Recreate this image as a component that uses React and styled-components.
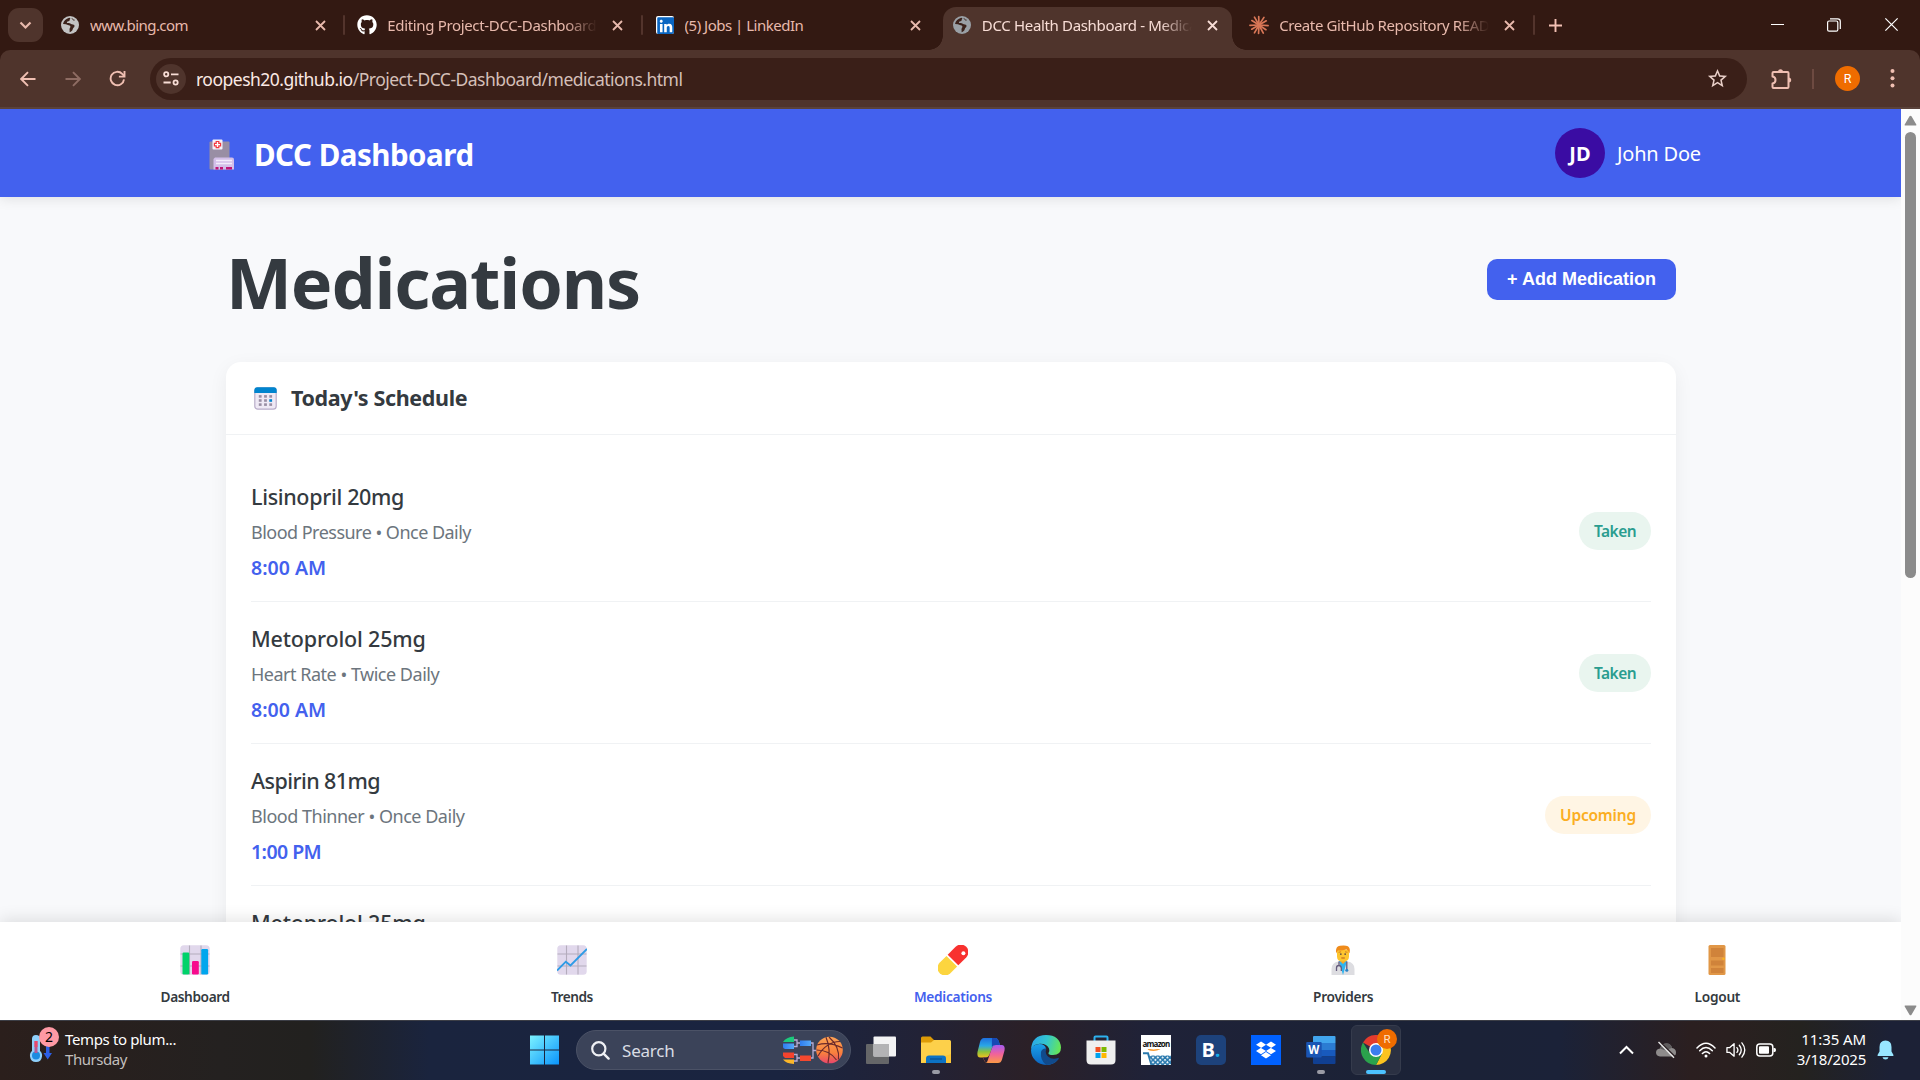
import React from "react";
import styled, { createGlobalStyle, css } from "styled-components";
import { FaGithub, FaLinkedin, FaDropbox } from "react-icons/fa";
import { MdStarBorder } from "react-icons/md";

const GlobalStyle = createGlobalStyle`
  * { box-sizing: border-box; margin: 0; padding: 0; }
  body {
    font-family: "Noto Sans", "Open Sans", sans-serif;
    background: #331912;
    overflow: hidden;
  }
  svg { display: block; flex: none; }
  button { border: 0; background: none; font: inherit; color: inherit; }
`;

const tracked = css`
  letter-spacing: ${(p) => p.$track || 0}px;
  white-space: nowrap;
`;

const Screen = styled.div`
  width: 1920px;
  height: 1080px;
  display: flex;
  flex-direction: column;
  overflow: hidden;
`;

/* ---------- browser tabs ---------- */

const TabStrip = styled.div`
  height: 50px;
  display: flex;
  align-items: flex-end;
  padding-left: 8px;
  background: #331912;
  color: #e8b9ac;
`;

const TabSearch = styled.button`
  width: 35px;
  height: 34px;
  margin: 0 8px 8px 0;
  border-radius: 11px;
  background: #4f342c;
  display: grid;
  place-items: center;
`;

const Tab = styled.div`
  position: relative;
  width: 289.6px;
  height: 43px;
  padding: 0 0 7px 9px;
  display: grid;
  grid-template-columns: 20px 211px 26px;
  column-gap: 10px;
  align-items: center;
  color: ${(p) => (p.$active ? "#f8ddd6" : "#e8b9ac")};
  background: ${(p) => (p.$active ? "#4f342c" : "transparent")};
  border-radius: 13px 13px 0 0;

  ${(p) =>
    p.$active &&
    css`
      &::before,
      &::after {
        content: "";
        position: absolute;
        bottom: 0;
        width: 14px;
        height: 14px;
      }
      &::before {
        left: -14px;
        background: radial-gradient(circle at 0 0, transparent 13.5px, #4f342c 14px);
      }
      &::after {
        right: -14px;
        background: radial-gradient(circle at 100% 0, transparent 13.5px, #4f342c 14px);
      }
    `}
`;

const Favicon = styled.span`
  display: grid;
  place-items: center;
`;

const LinkedInMark = styled.span`
  width: 18px;
  height: 18px;
  border-radius: 2px;
  background: #fff;
  color: #0a66c2;
  display: grid;
  place-items: center;
  overflow: hidden;
`;

const TabTitle = styled.span`
  ${tracked}
  font-size: 15px;
  line-height: 36px;
  overflow: hidden;
  ${(p) => p.$fade && css`mask-image: linear-gradient(to right, #000 178px, transparent 210px);`}
`;

const TabClose = styled.button`
  height: 36px;
  margin-left: -7px;
  display: grid;
  place-items: center;
`;

const TabGap = styled.span`
  width: 7.7px;
  height: 43px;
  padding-top: 8px;
  display: flex;
  justify-content: center;

  &::after {
    content: "";
    width: 2px;
    height: 20px;
    border-radius: 1px;
    background: ${(p) => (p.$visible ? "#53342c" : "transparent")};
  }
`;

const NewTab = styled.button`
  width: 37px;
  height: 36px;
  margin-bottom: 7px;
  display: grid;
  place-items: center;
  color: #f3c1b4;
`;

const WindowControls = styled.div`
  height: 50px;
  margin-left: auto;
  display: flex;
  color: #fff;
`;

const WindowButton = styled.button`
  width: 57px;
  height: 49px;
  display: grid;
  place-items: center;
`;

/* ---------- address bar ---------- */

const ToolbarBack = styled.div`
  height: 59px;
  background: #331912;
`;

const Toolbar = styled.div`
  height: 59px;
  padding-left: 5px;
  display: flex;
  align-items: center;
  background: #4f342c;
  border-bottom: 2px solid #5a423b;
  border-radius: 10px 10px 0 0;
`;

const ToolButton = styled.button`
  width: ${(p) => p.$width || 45}px;
  height: 42px;
  display: grid;
  place-items: center;
  color: ${(p) => (p.$dim ? "#8e6c63" : "#f0bfb2")};
`;

const AddressBar = styled.div`
  width: 1597px;
  height: 42px;
  margin: 0 13px 0 10px;
  padding: 0 18px 0 6px;
  display: flex;
  align-items: center;
  border-radius: 21px;
  background: #3a1f18;
`;

const SiteInfo = styled.button`
  width: 30px;
  height: 30px;
  border-radius: 50%;
  background: #4f342c;
  display: grid;
  place-items: center;
`;

const Url = styled.span`
  ${tracked}
  flex: 1;
  margin-left: 10px;
  font-size: 17.5px;
  line-height: 42px;
  padding-top: 1px;
  color: #d5bfb8;
`;

const Host = styled.span`
  color: #fbe9e4;
`;

const ToolDivider = styled.span`
  width: 2px;
  height: 20px;
  margin: 0 11px 0 10px;
  background: #6d4a41;
`;

const ProfileDot = styled.span`
  width: 25px;
  height: 25px;
  margin: 0 20px 0 10px;
  border-radius: 50%;
  background: #ef6c00;
  color: #fff;
  font: 400 12.5px/25px Roboto, sans-serif;
  text-align: center;
`;

/* ---------- web page ---------- */

const Viewport = styled.div`
  height: 911px;
  display: grid;
  grid-template-columns: 1901px 19px;
`;

const Page = styled.div`
  height: 911px;
  display: flex;
  flex-direction: column;
  overflow: hidden;
  background: #f8f9fb;
  color: #343a40;
`;

const SiteHeader = styled.header`
  position: relative;
  z-index: 1;
  flex: none;
  height: 88px;
  padding: 0 200px 0 209px;
  display: flex;
  justify-content: space-between;
  align-items: center;
  background: #4361ee;
  color: #fff;
  box-shadow: 0 2px 12px rgba(0, 0, 0, 0.1);
`;

const Brand = styled.div`
  display: flex;
  align-items: center;
  gap: 19px;
  padding-top: 3px;
`;

const BrandName = styled.span`
  ${tracked}
  font-size: 29.5px;
  font-weight: 700;
  line-height: 40px;
`;

const User = styled.div`
  display: flex;
  align-items: center;
  gap: 12px;
`;

const Avatar = styled.span`
  ${tracked}
  width: 50px;
  height: 50px;
  border-radius: 50%;
  background: #3a0ca3;
  font-size: 20px;
  font-weight: 700;
  line-height: 52px;
  text-align: center;
`;

const UserName = styled.span`
  ${tracked}
  font-size: 20px;
  line-height: 50px;
  padding-top: 2px;
  width: 84px;
`;

const Main = styled.main`
  flex: 1;
  min-height: 0;
  padding: 29px 225px 0 226px;
  display: flex;
  flex-direction: column;
  overflow: hidden;
`;

const TitleRow = styled.div`
  flex: none;
  height: 110px;
  margin-bottom: 26px;
  display: flex;
  justify-content: space-between;
  align-items: center;
`;

const PageTitle = styled.h1`
  ${tracked}
  font-size: 70px;
  font-weight: 700;
  line-height: 110px;
  padding-top: 2px;
`;

const AddButton = styled.button`
  ${tracked}
  width: 189px;
  height: 41px;
  margin-bottom: 3px;
  border-radius: 10px;
  background: #4361ee;
  color: #fff;
  font: 700 18px/41px "Liberation Sans", Arial, sans-serif;
`;

const Card = styled.section`
  flex: none;
  height: 720px;
  border-radius: 15px;
  background: #fff;
  box-shadow: 0 5px 19px rgba(0, 0, 0, 0.06);
`;

const CardHeader = styled.div`
  height: 73px;
  padding-left: 28px;
  display: flex;
  align-items: center;
  gap: 14px;
  border-bottom: 1px solid #f0f2f4;
`;

const CardTitle = styled.h2`
  ${tracked}
  font-size: 21.5px;
  font-weight: 700;
  line-height: 72px;
`;

const Schedule = styled.ul`
  list-style: none;
  padding: 25px 25px 0;
`;

const Dose = styled.li`
  height: 142px;
  padding-top: 19px;
  display: flex;
  justify-content: space-between;
  border-bottom: 1px solid #f0f2f4;
`;

const DoseText = styled.div`
  display: grid;
  grid-template-rows: 36px 35px 35px;
  line-height: 35px;
`;

const DrugName = styled.h3`
  ${tracked}
  font-size: 21.5px;
  font-weight: 500;
  line-height: inherit;
`;

const DrugUse = styled.p`
  ${tracked}
  font-size: 18px;
  color: #6c757d;
`;

const DoseTime = styled.p`
  ${tracked}
  font-size: 19.5px;
  font-weight: 600;
  color: #4361ee;
`;

const badgeTones = {
  taken: css`width: 72px; background: #e9f5ef; color: #2a9d8f;`,
  upcoming: css`width: 106px; background: #fff5e4; color: #fbae22;`,
};

const Badge = styled.span`
  ${tracked}
  height: 38px;
  margin-top: 33px;
  border-radius: 19px;
  font-size: 15.5px;
  font-weight: 600;
  line-height: 38px;
  text-align: center;
  ${(p) => badgeTones[p.$tone]}
`;

const BottomNav = styled.nav`
  position: relative;
  z-index: 1;
  flex: none;
  height: 98px;
  display: flex;
  justify-content: space-around;
  background: #fff;
  box-shadow: 0 -2px 16px rgba(0, 0, 0, 0.12);
`;

const NavItem = styled.a`
  width: ${(p) => p.$width}px;
  padding-top: 23px;
  display: flex;
  flex-direction: column;
  align-items: center;
  gap: 10px;
  color: ${(p) => (p.$active ? "#4361ee" : "#343a40")};
`;

const NavLabel = styled.span`
  ${tracked}
  font-size: 13.7px;
  font-weight: 600;
  line-height: 24px;
`;

const Scrollbar = styled.div`
  height: 911px;
  padding: 6px 0 4px;
  display: flex;
  flex-direction: column;
  align-items: center;
  background: #fcfcfc;
`;

const Thumb = styled.span`
  width: 11px;
  height: 446px;
  margin: 6px 0 auto;
  border-radius: 6px;
  background: #8b8b8b;
`;

/* ---------- taskbar ---------- */

const Taskbar = styled.footer`
  height: 60px;
  display: flex;
  border-top: 1px solid #3c3e46;
  background: linear-gradient(
    90deg,
    #2b1f1c 0,
    #242120 220px,
    #22211f 310px,
    #1a243e 430px,
    #1a2440 780px,
    #222236 920px,
    #2b2027 1030px,
    #1f2238 1150px,
    #1b2236 1380px,
    #1b2238 1560px,
    #2b1f20 1690px,
    #2a2020 1730px,
    #24221f 1800px,
    #1c2136 1890px
  );
  color: #fff;
`;

const Weather = styled.div`
  width: 519.5px;
  padding: 7px 0 0 28px;
  display: flex;
  gap: 5px;
`;

const WeatherIcon = styled.span`
  position: relative;
  width: 32px;
`;

const AlertCount = styled.span`
  position: absolute;
  left: 11px;
  top: -1px;
  width: 20px;
  height: 20px;
  border-radius: 50%;
  background: #ff99a4;
  color: #000;
  font-size: 14px;
  line-height: 20px;
  text-align: center;
`;

const WeatherText = styled.div`
  display: grid;
  grid-auto-rows: 20px;
  padding-top: 1px;
  font-size: 15px;
  line-height: 20px;
`;

const TextLine = styled.span`
  ${tracked}
  color: ${(p) => (p.$muted ? "#c2bfbd" : "#fff")};
`;

const Apps = styled.div`
  display: flex;
  align-items: center;
  gap: 5px;
  padding-bottom: 1px;
`;

const SearchBox = styled.div`
  width: 275px;
  height: 40px;
  margin-left: 1.5px;
  padding: 0 7px 0 14px;
  display: flex;
  align-items: center;
  border-radius: 20px;
  border: 1px solid #4b5266;
  background: #3b4359;
`;

const SearchHint = styled.span`
  ${tracked}
  flex: 1;
  padding: 1px 0 0 12px;
  font-size: 17px;
  line-height: 38px;
  color: #dadde4;
`;

const AppSlot = styled.button`
  position: relative;
  width: 50px;
  height: 50px;
  display: grid;
  place-items: center;
  border-radius: 6px;
  border: 1px solid ${(p) => (p.$active ? "#353b4c" : "transparent")};
  background: ${(p) => (p.$active ? "#2a3042" : "transparent")};

  ${(p) =>
    (p.$running || p.$active) &&
    css`
      &::after {
        content: "";
        position: absolute;
        bottom: 0;
        left: 50%;
        width: ${p.$active ? 20 : 8}px;
        height: 4px;
        border-radius: 2px;
        transform: translateX(-50%);
        background: ${p.$active ? "#4cc2ff" : "#9a9ba5"};
      }
    `}
`;

const ProfileBadge = styled.span`
  position: absolute;
  right: 3px;
  top: 3px;
  width: 20px;
  height: 20px;
  border-radius: 50%;
  background: #ef6c00;
  color: #ffe1c4;
  font: 400 11.5px/20px Roboto, sans-serif;
  text-align: center;
`;

const AmazonTile = styled.span`
  width: 30px;
  height: 30px;
  display: flex;
  flex-direction: column;
  justify-content: space-between;
  align-items: center;
  background: #fff;
`;

const AmazonWord = styled.span`
  font: 700 8px/13px "Open Sans", sans-serif;
  letter-spacing: -0.75px;
  color: #111;
  padding-top: 2px;
  height: 14px;
`;

const BookingTile = styled.span`
  width: 30px;
  height: 30px;
  border-radius: 5px;
  background: #1d427b;
  color: #fff;
  font: 700 20px/29px "Open Sans", sans-serif;
  text-align: center;
`;

const BookingDot = styled.span`
  color: #17a9e8;
`;

const DropboxTile = styled.span`
  width: 30px;
  height: 30px;
  background: #0061ff;
  display: grid;
  place-items: center;
`;

const Tray = styled.div`
  margin-left: auto;
  padding: 0 16px 1px 0;
  display: flex;
  align-items: center;
`;

const TrayCell = styled.button`
  width: ${(p) => p.$width}px;
  height: 50px;
  display: grid;
  place-items: center;
`;

const Status = styled.div`
  display: flex;
  gap: 10px;
  padding-left: 10px;
`;

const Clock = styled.div`
  width: 90px;
  display: grid;
  grid-auto-rows: 20px;
  padding-bottom: 3px;
  font-size: 15px;
  line-height: 20px;
  text-align: right;
`;

/* ---------- drawings ---------- */

const Close = ({ size = 11, w = 1.8 }) => (
  <svg width={size} height={size} viewBox="0 0 11 11">
    <path d="M1 1l9 9M10 1l-9 9" stroke="currentColor" strokeWidth={w} />
  </svg>
);

const Globe = ({ color }) => (
  <svg width="18" height="18" viewBox="0 0 18 18">
    <circle cx="9" cy="9" r="9" fill={color} />
    <path
      d="M8.2 1.8C5 2.6 2.6 5 2 8l2.9.2c1 .1 1.6.9 2.8 1 1.3.1 1.7.7 1.7 1.6 0 1-1 1.5-.9 2.7.1.9.2 1.7.1 2.7 1.6-.5 2.9-1.6 3.2-3.3.2-1.2 1.7-1.6 1.7-3 0-1.3-1.3-1.4-2.6-1.6-1.4-.2-1.7-1.2-3.1-1.2-1 0-1.9.1-1.9-.8 0-1 1.5-.8 2.2-1.2.9-.5.2-1.6 1-2.2.5-.4.3-.9-.9-1.1z"
      fill="#3b221b"
      fillRule="evenodd"
    />
    <path d="M11 2.3c.6 1.2 1.2 2 2.6 1.8" stroke="#3b221b" strokeWidth="1" fill="none" />
  </svg>
);

const Burst = () => (
  <svg width="20" height="20" viewBox="-10 -10 20 20" stroke="#d97757" strokeWidth="1.7" strokeLinecap="round">
    {[4, 34, 62, 93, 120, 150, 178, 212, 240, 268, 303, 330].map((a, i) => (
      <line key={a} x1="0" y1="0" x2={i % 2 ? 8.4 : 9.1} y2="0" transform={`rotate(${a})`} />
    ))}
  </svg>
);

const Arrow = ({ flip }) => (
  <svg width="16" height="16" viewBox="0 0 16 16" fill="none" stroke="currentColor" strokeWidth="1.9">
    <path d={flip ? "M.5 8h14M8 1.2L14.8 8 8 14.8" : "M15.5 8h-14M8 1.2L1.2 8 8 14.8"} />
  </svg>
);

const Reload = () => (
  <svg width="17" height="17" viewBox="0 0 17 17" fill="none" stroke="currentColor" strokeWidth="1.9">
    <path d="M15 9.3A6.7 6.7 0 1 1 13.2 3.9L15.2 6" />
    <path d="M15.5 1v5.6H9.9" />
  </svg>
);

const Tune = () => (
  <svg width="16" height="15" viewBox="0 0 16 15" fill="none" stroke="#f8ddd6" strokeWidth="1.8">
    <circle cx="3.2" cy="3.3" r="2.1" />
    <path d="M8 3.3h7.5M.5 11.5h7.2" />
    <circle cx="12.6" cy="11.5" r="2.1" />
  </svg>
);

const Puzzle = () => (
  <svg width="21" height="22" viewBox="0 0 21 22">
    <path
      d="M2.5 4H16.5q1 0 1 1V19q0 1-1 1H2.5q-1 0-1-1V15.5q3-.6 3-3.5t-3-3.5V5q0-1 1-1z"
      fill="none"
      stroke="currentColor"
      strokeWidth="2"
      strokeLinejoin="round"
    />
    <path d="M7 4a2.5 2.7 0 0 1 5 0zM17.5 9.5a2.7 2.5 0 0 1 0 5z" fill="currentColor" />
  </svg>
);

const Dots = () => (
  <svg width="5" height="21" viewBox="0 0 5 21" fill="currentColor">
    <circle cx="2.5" cy="3" r="2" />
    <circle cx="2.5" cy="10.3" r="2" />
    <circle cx="2.5" cy="17.6" r="2" />
  </svg>
);

const Hospital = () => (
  <svg width="26" height="32" viewBox="0 0 26 32">
    <rect x="0.5" y="2.5" width="20" height="28" rx="1" fill="#998ea4" />
    <rect x="3.5" y="0.5" width="10" height="10" rx="1" fill="#f6f1fa" />
    <path d="M7.2 2.5h2.6v1.8h1.8v2.6H9.8v1.8H7.2V6.9H5.4V4.3h1.8z" fill="#fff" stroke="#f2363f" strokeWidth="1.2" />
    <path d="M6 18.5h17q2 0 2 2v10H4.5V20z" fill="#d3bfe9" />
    <path d="M7 21.5h16M7 24.5h16" stroke="#f3ecfb" strokeWidth="1.3" />
    <path d="M6.5 28h3v2.5h-3zM11 28h3v2.5h-3zM17 28h6v2.5h-6z" fill="#c01675" />
  </svg>
);

const Calendar = () => (
  <svg width="23" height="23" viewBox="0 0 23 23">
    <rect x="0.8" y="0.8" width="21.4" height="21.4" rx="3" fill="#efe9f5" stroke="#b9adc9" strokeWidth="1.2" />
    <path d="M3.3.3h16.4a3 3 0 0 1 3 3V6H.3V3.3a3 3 0 0 1 3-3z" fill="#0084ce" />
    {[9.3, 13.4, 17.5].map((y) =>
      [6.2, 11.5, 16.7].map((x) => (
        <rect key={`${x}-${y}`} x={x - 1.4} y={y - 1.2} width="2.8" height="2.6" fill={x > 16 && y > 13 && y < 14 ? "#0084ce" : "#998ea4"} />
      ))
    )}
  </svg>
);

const GridTile = ({ children }) => (
  <svg width="30" height="30" viewBox="0 0 30 30">
    <rect x="0.3" y="0.3" width="29.4" height="29.4" rx="3.5" fill="#e1d8ec" />
    <path d="M9.5.5v29M21 .5v29M.5 9h29M.5 21h29" stroke="#b4acbc" strokeWidth="1.1" />
    {children}
  </svg>
);

const Bars = () => (
  <GridTile>
    <rect x="2.5" y="7.5" width="6.8" height="22" rx="1.2" fill="#00d26a" />
    <rect x="12" y="16" width="6.8" height="13.5" rx="1.2" fill="#f70a8d" />
    <rect x="21.3" y="4" width="6.8" height="25.5" rx="1.2" fill="#00a6ed" />
  </GridTile>
);

const Trend = () => (
  <GridTile>
    <path d="M0 25.5l8.8-8.8L13.5 20.5 30 4" stroke="#2e9be6" strokeWidth="1.9" fill="none" />
  </GridTile>
);

const Pill = () => (
  <svg width="30" height="30" viewBox="0 0 30 30">
    <g transform="rotate(-45 15 15)">
      <path d="M15 7.5H5.5a7.5 7.5 0 0 0 0 15H15z" transform="translate(-1.7 0)" fill="#fcd53f" />
      <path d="M13.3 7.5H24.5a7.5 7.5 0 0 1 0 15H13.3z" transform="translate(1.7 0)" fill="#f8312f" />
    </g>
    <circle cx="25.4" cy="8.2" r="2" fill="#fff" />
  </svg>
);

const Doctor = () => (
  <svg width="24" height="30" viewBox="0 0 24 30">
    <path d="M.5 30v-6q0-6.5 7-7.5h9q7 1 7 7.5v6z" fill="#dddde1" />
    <path d="M8 16l4 14 4-14z" fill="#2fb4ef" />
    <path d="M9.5 13h5v3.5L12 19l-2.5-2.5z" fill="#f9a824" />
    <path d="M6 5h12v6.5q0 5-6 5t-6-5z" fill="#fdc52f" />
    <path d="M5.2 8.5Q4 1.5 9 .8 18-.5 18.7 4q.3 2-.2 4.5Q17.5 5 15.5 4.6 9 6 7 5.2q-1 1-1.8 3.3z" fill="#ef8b1b" />
    <path d="M7.6 7.3l2.5-.5M14 6.8l2.5.5" stroke="#c9701a" strokeWidth=".8" />
    <path d="M9 9.2h1.6M13.4 9.2H15" stroke="#493a4b" strokeWidth="1.3" />
    <path d="M10.3 13h3.5" stroke="#b8591a" strokeWidth="1" />
    <path d="M8 16.5v4M5.5 26v-3q0-2.5 2.3-2.5T10.3 23v3M15.8 16.5V24" fill="none" stroke="#655b7c" strokeWidth="1.3" />
    <circle cx="15.8" cy="25.3" r="1.5" fill="#2a83c5" />
  </svg>
);

const Door = () => (
  <svg width="18" height="30" viewBox="0 0 18 30">
    <rect x=".5" y="0" width="17" height="30" rx="1.5" fill="#e19747" />
    <path d="M3 3h12.5v9H3zM3 15.5h12.5v5H3zM3 23h12.5v5H3z" fill="#d0833a" />
    <circle cx="15.5" cy="13.8" r="1.2" fill="#fbb31b" />
  </svg>
);

const ScrollArrow = ({ down }) => (
  <svg width="13" height="11" viewBox="0 0 13 11" fill="#8b8b8b">
    <path d={down ? "M1.3 0.5h10.4q1.2 0 .6 1L7.5 9.7q-1 1.3-2 0L.7 1.5q-.6-1 .6-1z" : "M1.3 10.5h10.4q1.2 0 .6-1L7.5 1.3q-1-1.3-2 0L.7 9.5q-.6 1 .6 1z"} />
  </svg>
);

const Thermometer = () => (
  <svg width="30" height="40" viewBox="0 0 30 40">
    <path d="M4 11q0-4 4-4t4 4v12q2.5 2 2 5.5-.7 5.5-6 5.5t-6-5.500q-.5-3.500 2-5.500z" fill="#8fd0fb" />
    <circle cx="8" cy="27.5" r="4" fill="#1b8be0" />
    <path d="M6.5 13h3v12h-3z" fill="#b45a94" />
    <path d="M6.5 13h3v6h-3z" fill="#e8486c" />
    <path d="M18 17h3.5v8H24l-4.3 6.5L15.5 25H18z" fill="#2c5fe6" />
  </svg>
);

const WindowsLogo = () => (
  <svg width="30" height="30" viewBox="0 0 30 30">
    <defs>
      <linearGradient id="win" gradientUnits="userSpaceOnUse" x1="0" y1="0" x2="30" y2="30">
        <stop offset="0" stopColor="#7df3ff" />
        <stop offset="1" stopColor="#0791fb" />
      </linearGradient>
    </defs>
    <path d="M0 .5h14v14H0zM15 .5h14v14H15zM0 15.5h14v14H0zM15 15.5h14v14H15z" fill="url(#win)" />
  </svg>
);

const Magnifier = () => (
  <svg width="19" height="19" viewBox="0 0 19 19" fill="none" stroke="#eef0f4">
    <circle cx="7.8" cy="7.8" r="6.6" strokeWidth="2.2" />
    <path d="M12.6 12.6l5 5" strokeWidth="2.4" strokeLinecap="round" />
  </svg>
);

const Bracket = () => (
  <svg width="61" height="30" viewBox="0 0 61 30">
    <defs>
      <linearGradient id="ball" x1="0" y1="0" x2="0" y2="1">
        <stop offset="0" stopColor="#fba254" />
        <stop offset=".6" stopColor="#f9813d" />
        <stop offset="1" stopColor="#e8476c" />
      </linearGradient>
      <linearGradient id="bl" x1="0" x2="1">
        <stop offset="0" stopColor="#2f7df0" />
        <stop offset="1" stopColor="#54a8f8" />
      </linearGradient>
    </defs>
    <path d="M1 7q3-5 11-5.5V7z" fill="#1cc97c" />
    <path d="M1 8.5h11V14H3q-2-.5-2-2z" fill="url(#bl)" />
    <path d="M1 17.5h11V23H3l-2-2z" fill="#f4432e" />
    <path d="M1 24.5h11V29q-8-.5-11-4.5z" fill="#fbb629" />
    <path d="M12 5h3v6.5h-3M15 8h4M12 19.5h3V26h-3M15 23h4M28 8h3v15h-3M31 15.5h4" fill="none" stroke="#b9add4" strokeWidth="1.3" />
    <rect x="18" y="5.5" width="11" height="5.5" fill="url(#bl)" />
    <rect x="18" y="20.5" width="11" height="5.5" fill="#f4482f" />
    <circle cx="47.5" cy="15" r="13.3" fill="url(#ball)" />
    <g fill="none" stroke="#6b2a2b" strokeWidth="1.2">
      <path d="M44 2.2Q49 14 46 28M35 10q12-4 25.5 3M36 21Q44 7 58 6.5M47 2Q58 12 56.5 24.5M34.5 15q13 0 20 10" />
    </g>
  </svg>
);

const TaskView = () => (
  <svg width="30" height="28" viewBox="0 0 30 28">
    <rect x="0" y="8" width="23" height="20" rx="1" fill="#656668" />
    <rect x="7.5" y=".5" width="22.5" height="20" rx="1" fill="#f3f3f4" />
    <path d="M7.5 8H23v12.5H7.5z" fill="#b3b3b5" />
  </svg>
);

const Explorer = () => (
  <svg width="30" height="28" viewBox="0 0 30 28">
    <path d="M0 2q0-1.5 1.5-1.5h8L13 4H29v7H0z" fill="#dd9b07" />
    <path d="M0 6.5h10L13 4h15.5Q30 4 30 5.5V27H0z" fill="#fdd04a" />
    <path d="M0 27l30-9v9z" fill="#fbc02b" opacity=".6" />
    <path d="M5 27v-4.5Q5 19.5 8 19.5h14q3 0 3 3V27z" fill="#0c72c4" />
    <path d="M9 23h12" stroke="#0a4d8f" strokeWidth="1.2" />
  </svg>
);

const Copilot = () => (
  <svg width="30" height="27" viewBox="0 0 30 27">
    <defs>
      <linearGradient id="cpl" x1="0" y1="0" x2="0" y2="1">
        <stop offset="0" stopColor="#1e6fe0" />
        <stop offset=".4" stopColor="#2aa7e6" />
        <stop offset=".7" stopColor="#8ac33d" />
        <stop offset="1" stopColor="#f0c21f" />
      </linearGradient>
      <linearGradient id="cpr" x1="0" y1="0" x2="0" y2="1">
        <stop offset="0" stopColor="#a45bf2" />
        <stop offset=".5" stopColor="#f0629b" />
        <stop offset="1" stopColor="#fb9a45" />
      </linearGradient>
    </defs>
    <path d="M8 1h11.5Q22 1.300 23 5l1 3h-4q-3 0-4 3l-2.5 7Q12.5 20.5 10 20.5H4.5Q.5 20.5 1.5 15L4 5Q5 1.3 8 1z" fill="url(#cpl)" />
    <path d="M16 1h3.5Q22 1.3 23 5l1 3h-4.5Q17 8 15.8 10z" fill="#1749b5" />
    <path d="M22 26H12Q9 26 7.8 22.5l-.7-2H10q2.5 0 3.5-3L16 11q1-3 4-3h5.5q4 0 3 5.5l-2.5 9Q25 26 22 26z" fill="url(#cpr)" />
    <path d="M12 19.8q1-.7 1.5-2.3L15 13.5 11.5 24q-.8 2-2 1.2Q8.3 24 7.1 20.5H10q1.2 0 2-.7z" fill="#2a2030" />
  </svg>
);

const Edge = () => (
  <svg width="30" height="30" viewBox="0 0 30 30">
    <defs>
      <linearGradient id="edt" x1="0" y1=".3" x2="1" y2=".5">
        <stop offset="0" stopColor="#2aa6e8" />
        <stop offset=".5" stopColor="#33c6cf" />
        <stop offset="1" stopColor="#66e657" />
      </linearGradient>
      <linearGradient id="edb" x1="0" y1="0" x2="0" y2="1">
        <stop offset="0" stopColor="#1aa0e8" />
        <stop offset="1" stopColor="#0c64bf" />
      </linearGradient>
    </defs>
    <path d="M0 15A15 15 0 0 0 15 30q8 0 12.5-6-8 2.5-12-2-3-4-.5-8.5Q14 9 8.5 9 1 9.5 0 15z" fill="url(#edb)" />
    <path d="M10 17q-1 8 5 13 8.5 0 12.8-6.5.2-1-.8-.5-6 2-10-1.5-3.5-3.5-1.5-8Q11 13 10 17z" fill="#114a8b" />
    <path d="M0 14.5Q1 0 15 0t15 12.5q0 7.5-8 7.5-5 0-4.5-2 1.5-2 .5-4.5-2-5-9-4.8Q2 9 0 14.5z" fill="url(#edt)" />
  </svg>
);

const Store = () => (
  <svg width="30" height="30" viewBox="0 0 30 30">
    <path d="M8.5 6V2.5q0-1 1-1h11q1 0 1 1V6" fill="none" stroke="#2db1ee" strokeWidth="2" />
    <path d="M.5 5.5h29V25q0 4.5-4.5 4.5H5Q.5 29.5.5 25z" fill="#efefef" />
    <path d="M9.5 12h5v5h-5z" fill="#f05023" />
    <path d="M15.5 12h5v5h-5z" fill="#7db900" />
    <path d="M9.5 18h5v5h-5z" fill="#00a3ee" />
    <path d="M15.5 18h5v5h-5z" fill="#ffb800" />
  </svg>
);

const AmazonCart = () => (
  <svg width="30" height="16" viewBox="0 0 30 16">
    <defs>
      <pattern id="mesh" width="3.4" height="3.4" patternUnits="userSpaceOnUse" patternTransform="rotate(45)">
        <rect width="3.4" height="3.4" fill="#2878ad" />
        <rect width="1.9" height="1.9" fill="#e6f1f8" />
      </pattern>
    </defs>
    <path d="M7 0q6 2.5 12-.3" stroke="#f79b34" strokeWidth="1.4" fill="none" />
    <path d="M2 4.2h5L10.5 16" stroke="#2878ad" strokeWidth="2" fill="none" />
    <path d="M8.5 6.5H30V16H11z" fill="url(#mesh)" />
  </svg>
);

const WordLetter = styled.text`
  font: 700 11.5px "Open Sans", sans-serif;
  fill: #fff;
`;

const Word = () => (
  <svg width="30" height="28" viewBox="0 0 30 28">
    <path d="M7 1q0-1 1-1h20.5q1 0 1 1v6H7z" fill="#41a5ee" />
    <path d="M7 7h22.5v7H7z" fill="#2b7cd3" />
    <path d="M7 14h22.5v6.5H7z" fill="#185abd" />
    <path d="M7 20.5h22.5V27q0 1-1 1H8q-1 0-1-1z" fill="#103f91" />
    <rect x=".2" y="6" width="15.5" height="15.5" rx="1" fill="#1a55b4" />
    <WordLetter x="2.2" y="18">W</WordLetter>
  </svg>
);

const Chrome = () => (
  <svg width="30" height="30" viewBox="-15 -15 30 30">
    <path d="M0 0L-13 -7.5A15 15 0 0 1 13 -7.5z" fill="#e33b2e" />
    <path d="M0 -7H13.2A15 15 0 0 1 0 15L6 3.5z" fill="#fcc31f" />
    <path d="M-6 3.5L-13 -7.5A15 15 0 0 0 0 15L6.1 3.5 0 7z" fill="#2ba24c" />
    <circle r="7" fill="#fff" />
    <circle r="5.5" fill="#3b7ded" />
  </svg>
);

const Chevron = ({ up, w = 2 }) => (
  <svg width="15" height="10" viewBox="0 0 15 10" fill="none" stroke="currentColor" strokeWidth={w}>
    <path d={up ? "M1 8.5l6.5-6.5L14 8.5" : "M2.5 2.5l5 5 5-5"} />
  </svg>
);

const CloudOff = () => (
  <svg width="22" height="18" viewBox="0 0 22 18">
    <path d="M5 15.5Q1 15 1 11.5q0-3.5 4-4Q6.5 2.5 11.5 2.5q4.500 0 5.5 4.5 4 .5 4 4.5t-4 4z" fill="#8e8b8b" />
    <path d="M5 7.5Q7 2.5 12 2.5q4 0 5 4.5-3 0-5 3z" fill="#5e5b5c" />
    <path d="M4.5 .5L20.5 16" stroke="#2a1f22" strokeWidth="1.4" />
    <path d="M3.5 1L19 16.8" stroke="#e8e8e8" strokeWidth="1.4" />
  </svg>
);

const Wifi = () => (
  <svg width="20" height="18" viewBox="0 0 20 18" fill="none" stroke="#fff" strokeWidth="1.5" strokeLinecap="round">
    <path d="M1 7q9-9.5 18 0M3.7 9.8q6.3-6.5 12.6 0M6.4 12.5q3.6-3.7 7.2 0" />
    <circle cx="10" cy="15" r="1.5" fill="#fff" stroke="none" />
  </svg>
);

const Speaker = () => (
  <svg width="20" height="18" viewBox="0 0 21 18" fill="none" stroke="#fff" strokeWidth="1.4" strokeLinecap="round" strokeLinejoin="round">
    <path d="M1 6.5h3L8.5 2.5v13L4 11.5H1z" />
    <path d="M11.5 6.5q2 2.5 0 5M14 4q4 5 0 10M16.7 1.5q6 7.5 0 15" />
  </svg>
);

const Battery = () => (
  <svg width="20" height="18" viewBox="0 0 20 18">
    <rect x=".8" y="3" width="16" height="12" rx="3" fill="none" stroke="#fff" strokeWidth="1.5" />
    <rect x="3" y="5.2" width="10" height="7.6" rx="1" fill="#fff" />
    <path d="M17.5 7h1q1.5 0 1.5 2t-1.5 2h-1z" fill="#fff" />
  </svg>
);

const Bell = () => (
  <svg width="17" height="20" viewBox="0 0 17 20" fill="#98e6ff">
    <path d="M8.5.5q6 0 6 6.5v4.5l2 3.5q.3 1-.7 1H1.2q-1 0-.7-1l2-3.5V7q0-6.5 6-6.5z" />
    <path d="M5.5 17.3h6q-.5 2.2-3 2.2t-3-2.2z" />
  </svg>
);

/* ---------- content ---------- */

const tabs = [
  { title: "www.bing.com", icon: <Globe color="#c3c3c3" />, track: -0.56, sep: true },
  { title: "Editing Project-DCC-Dashboard", icon: <FaGithub size={20} color="#fff" />, track: -0.34, fade: true, sep: true },
  {
    title: "(5) Jobs | LinkedIn",
    icon: (
      <LinkedInMark>
        <FaLinkedin size={20} />
      </LinkedInMark>
    ),
    track: -0.5,
  },
  { title: "DCC Health Dashboard - Medications", icon: <Globe color="#9aa0a6" />, track: -0.34, fade: true, active: true },
  { title: "Create GitHub Repository README", icon: <Burst />, track: -0.38, fade: true, sep: true },
];

const doses = [
  { name: "Lisinopril 20mg", use: "Blood Pressure • Once Daily", time: "8:00 AM", status: "Taken", tone: "taken", t: [-0.33, -0.52, 0] },
  { name: "Metoprolol 25mg", use: "Heart Rate • Twice Daily", time: "8:00 AM", status: "Taken", tone: "taken", t: [-0.17, -0.49, 0] },
  { name: "Aspirin 81mg", use: "Blood Thinner • Once Daily", time: "1:00 PM", status: "Upcoming", tone: "upcoming", t: [-0.57, -0.48, -0.55] },
  { name: "Metoprolol 25mg", use: "Heart Rate • Twice Daily", time: "8:00 PM", status: "Upcoming", tone: "upcoming", t: [-0.17, -0.49, 0] },
];

const navItems = [
  { label: "Dashboard", icon: <Bars />, width: 68, track: -0.4 },
  { label: "Trends", icon: <Trend />, width: 41, track: -0.5 },
  { label: "Medications", icon: <Pill />, width: 77, track: -0.3, active: true },
  { label: "Providers", icon: <Doctor />, width: 59, track: -0.3 },
  { label: "Logout", icon: <Door />, width: 45, track: -0.28 },
];

export default function App() {
  return (
    <Screen>
      <GlobalStyle />
      <TabStrip>
        <TabSearch>
          <Chevron w={2.2} />
        </TabSearch>
        {tabs.map((t) => (
          <React.Fragment key={t.title}>
            <Tab $active={t.active}>
              <Favicon>{t.icon}</Favicon>
              <TabTitle $track={t.track} $fade={t.fade}>{t.title}</TabTitle>
              <TabClose>
                <Close />
              </TabClose>
            </Tab>
            <TabGap $visible={t.sep} />
          </React.Fragment>
        ))}
        <NewTab>
          <svg width="13" height="13" viewBox="0 0 13 13">
            <path d="M6.5 0v13M0 6.5h13" stroke="currentColor" strokeWidth="1.9" />
          </svg>
        </NewTab>
        <WindowControls>
          <WindowButton>
            <svg width="13" height="2" viewBox="0 0 13 2">
              <path d="M0 .5h13" stroke="currentColor" />
            </svg>
          </WindowButton>
          <WindowButton>
            <svg width="16" height="14" viewBox="0 0 16 14" fill="none" stroke="currentColor" strokeWidth="1.2">
              <rect x=".6" y="3" width="10.2" height="10.2" rx="1.5" />
              <path d="M3 .8h7.7q2.6 0 2.6 2.6V11" />
            </svg>
          </WindowButton>
          <WindowButton>
            <Close size={15} w={0.9} />
          </WindowButton>
        </WindowControls>
      </TabStrip>

      <ToolbarBack>
        <Toolbar>
          <ToolButton><Arrow /></ToolButton>
          <ToolButton $dim><Arrow flip /></ToolButton>
          <ToolButton><Reload /></ToolButton>
          <AddressBar>
            <SiteInfo><Tune /></SiteInfo>
            <Url $track={-0.51}>
              <Host>roopesh20.github.io</Host>/Project-DCC-Dashboard/medications.html
            </Url>
            <MdStarBorder size={23} color="#e9cfc8" />
          </AddressBar>
          <ToolButton $width={42}><Puzzle /></ToolButton>
          <ToolDivider />
          <ProfileDot>R</ProfileDot>
          <ToolButton $width={24}><Dots /></ToolButton>
        </Toolbar>
      </ToolbarBack>

      <Viewport>
        <Page>
          <SiteHeader>
            <Brand>
              <Hospital />
              <BrandName $track={-0.48}>DCC Dashboard</BrandName>
            </Brand>
            <User>
              <Avatar>JD</Avatar>
              <UserName $track={-0.2}>John Doe</UserName>
            </User>
          </SiteHeader>

          <Main>
            <TitleRow>
              <PageTitle $track={-1.15}>Medications</PageTitle>
              <AddButton>+ Add Medication</AddButton>
            </TitleRow>
            <Card>
              <CardHeader>
                <Calendar />
                <CardTitle $track={-0.36}>Today's Schedule</CardTitle>
              </CardHeader>
              <Schedule>
                {doses.map((d, i) => (
                  <Dose key={i}>
                    <DoseText>
                      <DrugName $track={d.t[0]}>{d.name}</DrugName>
                      <DrugUse $track={d.t[1]}>{d.use}</DrugUse>
                      <DoseTime $track={d.t[2]}>{d.time}</DoseTime>
                    </DoseText>
                    <Badge $tone={d.tone} $track={d.tone === "taken" ? -0.5 : -0.2}>{d.status}</Badge>
                  </Dose>
                ))}
              </Schedule>
            </Card>
          </Main>

          <BottomNav>
            {navItems.map((n) => (
              <NavItem key={n.label} $width={n.width} $active={n.active}>
                {n.icon}
                <NavLabel $track={n.track}>{n.label}</NavLabel>
              </NavItem>
            ))}
          </BottomNav>
        </Page>
        <Scrollbar>
          <ScrollArrow />
          <Thumb />
          <ScrollArrow down />
        </Scrollbar>
      </Viewport>

      <Taskbar>
        <Weather>
          <WeatherIcon>
            <Thermometer />
            <AlertCount>2</AlertCount>
          </WeatherIcon>
          <WeatherText>
            <TextLine $track={-0.36}>Temps to plum...</TextLine>
            <TextLine $track={-0.45} $muted>Thursday</TextLine>
          </WeatherText>
        </Weather>
        <Apps>
          <AppSlot><WindowsLogo /></AppSlot>
          <SearchBox>
            <Magnifier />
            <SearchHint $track={-0.2}>Search</SearchHint>
            <Bracket />
          </SearchBox>
          <AppSlot><TaskView /></AppSlot>
          <AppSlot $running><Explorer /></AppSlot>
          <AppSlot><Copilot /></AppSlot>
          <AppSlot><Edge /></AppSlot>
          <AppSlot><Store /></AppSlot>
          <AppSlot>
            <AmazonTile>
              <AmazonWord>amazon</AmazonWord>
              <AmazonCart />
            </AmazonTile>
          </AppSlot>
          <AppSlot>
            <BookingTile>B<BookingDot>.</BookingDot></BookingTile>
          </AppSlot>
          <AppSlot>
            <DropboxTile><FaDropbox size={20} color="#fff" /></DropboxTile>
          </AppSlot>
          <AppSlot $running><Word /></AppSlot>
          <AppSlot $active>
            <Chrome />
            <ProfileBadge>R</ProfileBadge>
          </AppSlot>
        </Apps>
        <Tray>
          <TrayCell $width={40}><Chevron up /></TrayCell>
          <TrayCell $width={40}><CloudOff /></TrayCell>
          <Status>
            <Wifi />
            <Speaker />
            <Battery />
          </Status>
          <Clock>
            <TextLine $track={-0.1}>11:35 AM</TextLine>
            <TextLine $track={-0.22}>3/18/2025</TextLine>
          </Clock>
          <TrayCell $width={38}><Bell /></TrayCell>
        </Tray>
      </Taskbar>
    </Screen>
  );
}
